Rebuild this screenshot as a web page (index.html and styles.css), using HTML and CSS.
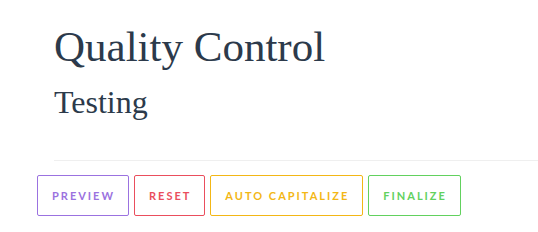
FILE: index.html
```html
<!DOCTYPE html>
<html lang="en">
<head>
    <meta charset="UTF-8">
    <meta name="viewport" content="width=device-width, initial-scale=1.0">
    <title>Quality Control</title>
    <link rel="stylesheet" href="styles.css">
</head>
<body>
    <div class="page-header">
        <h1>Quality Control</h1>
        <h2>Testing</h2>
    </div>

    <hr class="divider">

    <!-- Actions -->
    <div class="toolbar">
        <button class="btn btn-preview">Preview</button>
        <button class="btn btn-reset">Reset</button>
        <button class="btn btn-capitalize">Auto Capitalize</button>
        <button class="btn btn-finalize">Finalize</button>
    </div>
</body>
</html>
```

FILE: styles.css
```css
body {
    margin: 0;
    padding: 0;
    background: #fff;
    color: #2c3a4b;
    font-family: 'Liberation Serif', 'Times New Roman', serif;
}
.page-header {
    padding: 22px 0 0 54px;
}
h1 {
    margin: 0;
    font-size: 43px;
    line-height: 50px;
    font-weight: normal;
}
h2 {
    margin: 12px 0 0 0;
    font-size: 32px;
    line-height: 36px;
    font-weight: normal;
}
.divider {
    margin: 40px 0 0 54px;
    border: none;
    border-top: 1px solid #efefef;
    height: 0;
}
.toolbar {
    display: flex;
    gap: 5px;
    padding: 14px 0 0 37px;
}
.btn {
    display: inline-flex;
    align-items: center;
    height: 41px;
    box-sizing: border-box;
    padding: 0 13px 0 14px;
    background: #fff;
    border: 1px solid #999;
    border-radius: 2px;
    font-family: 'Lato', sans-serif;
    font-weight: bold;
    font-size: 11px;
    letter-spacing: 2px;
    text-transform: uppercase;
    cursor: pointer;
}
.btn-preview {
    color: #9b72e0;
    border-color: #9b72e0;
}
.btn-reset {
    color: #ea4e5d;
    border-color: #ea4e5d;
}
.btn-capitalize {
    color: #f3b716;
    border-color: #f3b716;
}
.btn-finalize {
    color: #62d15e;
    border-color: #62d15e;
}
```
